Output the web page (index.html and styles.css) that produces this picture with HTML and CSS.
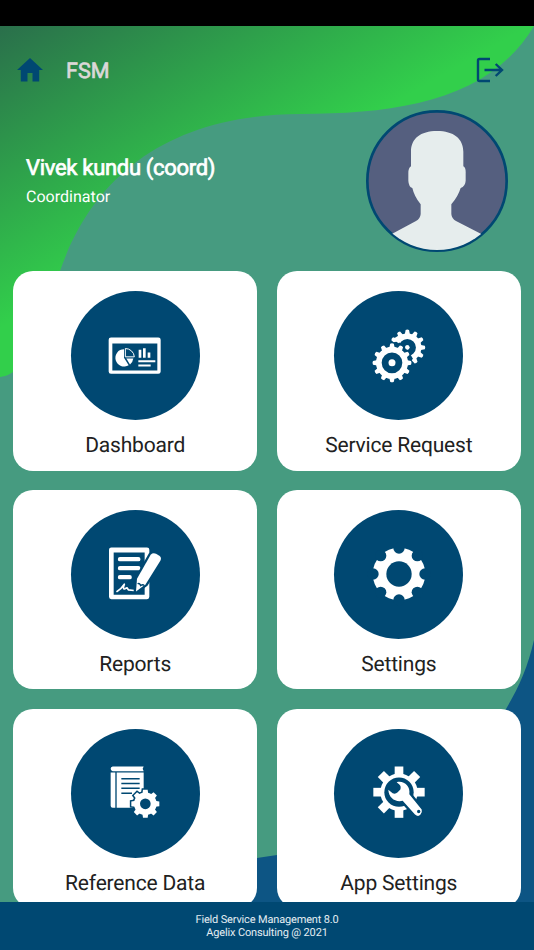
FILE: index.html
```html
<!DOCTYPE html>
<html lang="en">
<head>
<meta charset="utf-8">
<title>FSM</title>
<link rel="stylesheet" href="styles.css">
</head>
<body>
<div class="status"></div>
<div class="screen">
  <svg class="backdrop" viewBox="0 26 534 876" aria-hidden="true">
    <defs>
      <linearGradient id="leaf" gradientUnits="userSpaceOnUse" x1="0" y1="26" x2="130" y2="254">
        <stop offset="0" stop-color="#2a6f4b"/><stop offset="1" stop-color="#32cf4b"/>
      </linearGradient>
    </defs>
    <path fill="url(#leaf)" d="M0 26H534C490 100 400 114 300 114C175 115 95 170 60 271C42 322 30 374 0 377Z"/>
    <path fill="#0d5584" d="M534 640C528 667 518 689 506 709C460 792 380 830 277 855L257 858C220 870 200 885 180 902H534Z"/>
  </svg>
  <header class="bar">
    <svg class="home" viewBox="0 0 26 24"><path d="M13 0 26 12H22.200V23.500H15.500V15H10.500V23.500H3.800V12H0Z"/></svg>
    <h1 class="app">FSM</h1>
    <svg class="logout" viewBox="0 0 28 26"><path d="M14 2H3.500Q2 2 2 3.500V22.500Q2 24 3.500 24H14M8.500 13H26M19.700 7 26 13 19.700 19"/></svg>
  </header>
  <section class="profile">
    <div>
      <h2 class="name">Vivek kundu (coord)</h2>
      <p class="role">Coordinator</p>
    </div>
    <svg class="avatar" viewBox="48 210 426 426">
      <defs><clipPath id="face"><circle cx="261" cy="423" r="207"/></clipPath></defs>
      <circle cx="261" cy="423" r="209" fill="#555f7f" stroke="#004872" stroke-width="8"/>
      <path clip-path="url(#face)" fill="#e6eded" d="M261 273C311 273 340 296 340 335V379Q348 383 347 400V422Q346 439 332 444Q324 470 304 493V522Q305 536 318 543L410 590V640H110V590L198 543Q211 536 212 522V493Q193 470 187 444Q176 440 175 422V400Q175 383 183 379V335C183 296 211 273 261 273Z"/>
    </svg>
  </section>
  <main class="grid">
    <article class="card">
      <div class="disc"><svg viewBox="1 1.500 240 240">
        <path fill-rule="evenodd" d="M49 66H191Q198 66 198 73V168Q198 175 191 175H49Q42 175 42 168V73Q42 66 49 66ZM53 84V165H188V84Z"/>
        <path d="M88 101V127L102 149A26 26 0 1 1 88 101Z"/>
        <path class="line" stroke-width="3" d="M92 99V124H119A27 27 0 0 0 92 99Z"/>
        <path d="M95 129H116Q114 141 106 147Z"/>
        <path d="M132 103H140V127H132ZM145 98H153V127H145ZM159 111H167V127H159ZM131 134H182V140H131ZM131 147H168V153H131Z"/>
      </svg></div>
      <p class="label">Dashboard</p>
    </article>
    <article class="card">
      <div class="disc"><svg viewBox="3 1.500 240 240">
        <defs>
          <path id="cog" d="M-9 -40 -5.500 -57Q0 -60 5.500 -57L9 -40Z"/>
          <g id="teeth12"><use href="#cog"/><use href="#cog" transform="rotate(30)"/><use href="#cog" transform="rotate(60)"/><use href="#cog" transform="rotate(90)"/><use href="#cog" transform="rotate(120)"/><use href="#cog" transform="rotate(150)"/><use href="#cog" transform="rotate(180)"/><use href="#cog" transform="rotate(210)"/><use href="#cog" transform="rotate(240)"/><use href="#cog" transform="rotate(270)"/><use href="#cog" transform="rotate(300)"/><use href="#cog" transform="rotate(330)"/></g>
        </defs>
        <g transform="translate(148 96) scale(.92)"><circle r="37" class="line" stroke-width="18"/><circle r="7"/><use href="#teeth12"/></g>
        <circle class="cut" cx="102" cy="142" r="56"/>
        <path class="cut" d="M97 82 120 78 146 98 164 128 160 142 102 142Z"/>
        <path d="M106 70 121 83Q133 69 148 70L143 56 122 60Z"/>
        <circle cx="148" cy="96" r="6.500"/>
        <g transform="translate(102 142)"><circle r="39.500" class="line" stroke-width="17"/><circle r="10.500"/><use href="#teeth12"/></g>
      </svg></div>
      <p class="label">Service Request</p>
    </article>
    <article class="card">
      <div class="disc"><svg viewBox="1 1.500 240 240">
        <path fill-rule="evenodd" d="M50 42H157Q164 42 164 49V190Q164 197 157 197H50Q43 197 43 190V49Q43 42 50 42ZM57 57V184H150V57Z"/>
        <path class="line round" stroke-width="13" d="M76 77H131M76 104H131M76 131H105"/>
        <path class="line round" stroke-width="5" d="M67 174Q79 167 89 152Q83 169 91 166L97 163 101 169 118 171"/>
        <path class="outline" d="M168 64Q175 57 184 61L194 67Q202 73 197 82L153 152 124 174 127 136Z"/>
        <path class="cutline" d="M129 151Q134 147 138 156Q145 151 148 156"/>
      </svg></div>
      <p class="label">Reports</p>
    </article>
    <article class="card">
      <div class="disc"><svg viewBox="3 1 240 240">
        <circle cx="123" cy="121" r="79"/>
        <g class="cut"><circle cx="123" cy="121" r="38"/><circle cx="123" cy="43" r="17"/><circle cx="178" cy="66" r="17"/><circle cx="201" cy="121" r="17"/><circle cx="178" cy="176" r="17"/><circle cx="123" cy="199" r="17"/><circle cx="68" cy="176" r="17"/><circle cx="45" cy="121" r="17"/><circle cx="68" cy="66" r="17"/></g>
      </svg></div>
      <p class="label">Settings</p>
    </article>
    <article class="card">
      <div class="disc"><svg viewBox="1 1.500 240 240">
        <path d="M54 42H147L144 49 147 56H54Q48 55 48 49T54 42ZM48 60H62V166H54Q48 166 48 160ZM66 60H147V166H66Z"/>
        <path class="cutline" d="M80 79H135M80 93H135M80 107H135M80 122H112"/>
        <g transform="translate(152 154)">
          <defs><path id="tooth8" d="M-9 -28 -7 -42H7L9 -28Z"/><g id="teeth8"><use href="#tooth8"/><use href="#tooth8" transform="rotate(45)"/><use href="#tooth8" transform="rotate(90)"/><use href="#tooth8" transform="rotate(135)"/><use href="#tooth8" transform="rotate(180)"/><use href="#tooth8" transform="rotate(225)"/><use href="#tooth8" transform="rotate(270)"/><use href="#tooth8" transform="rotate(315)"/></g></defs>
          <g class="gap"><circle r="34"/><use href="#teeth8"/></g>
          <circle r="34"/><use href="#teeth8"/><circle class="cut" r="16"/>
        </g>
      </svg></div>
      <p class="label">Reference Data</p>
    </article>
    <article class="card">
      <div class="disc"><svg viewBox="3 1.500 240 240">
        <g transform="translate(123 119)"><defs><path id="block" d="M-13 -50V-77H13V-50Z"/></defs><circle r="56"/><use href="#block"/><use href="#block" transform="rotate(45)"/><use href="#block" transform="rotate(90)"/><use href="#block" transform="rotate(135)"/><use href="#block" transform="rotate(180)"/><use href="#block" transform="rotate(225)"/><use href="#block" transform="rotate(270)"/><use href="#block" transform="rotate(315)"/><circle class="cut" r="44"/></g>
        <path class="outline" d="M116 89C136 83 158 99 154 125L191 171Q194 180 187 187T171 186L134 145C112 150 92 137 91 112L104 122Q112 126 119 119L127 111Q130 101 124 96Z"/>
        <circle class="cut" cx="182" cy="177" r="5"/>
      </svg></div>
      <p class="label">App Settings</p>
    </article>
  </main>
</div>
<footer class="foot"><p>Field Service Management 8.0</p><p>Agelix Consulting @ 2021</p></footer>
</body>
</html>
```
FILE: styles.css
```css
* { box-sizing: border-box; margin: 0; padding: 0; }
body {
  display: flex;
  flex-direction: column;
  height: 950px;
  overflow: hidden;
  font-family: Roboto, sans-serif;
  text-rendering: geometricPrecision;
  background: #469b80;
}
.status { flex: none; height: 26px; background: #000; }
.screen { position: relative; height: 876px; overflow: hidden; }
.backdrop { position: absolute; inset: 0; width: 534px; height: 876px; }
.bar {
  position: relative;
  display: flex;
  align-items: center;
  height: 84px;
  padding: 4px 30px 0 17px;
}
.home { width: 26px; height: 24px; fill: #004872; }
.app {
  margin-left: 23px;
  padding-top: 2px;
  font-size: 21.500px;
  font-weight: 400;
  color: #dcd8d8;
  -webkit-text-stroke: .7px #dcd8d8;
}
.logout {
  width: 28px;
  height: 26px;
  margin-left: auto;
  fill: none;
  stroke: #004872;
  stroke-width: 2.4;
}
.profile {
  position: relative;
  display: flex;
  justify-content: space-between;
  height: 161px;
  padding: 0 26px;
  color: #fff;
}
.name {
  margin-top: 45px;
  font-size: 22px;
  line-height: 28px;
  font-weight: 400;
  letter-spacing: -.31px;
  -webkit-text-stroke: .7px #fff;
}
.role { margin-top: 4px; font-size: 16px; line-height: 20px; letter-spacing: .02px; }
.avatar { width: 142px; height: 142px; }
.grid {
  position: relative;
  display: grid;
  grid-template-columns: 1fr 1fr;
  grid-auto-rows: 199.500px;
  gap: 19.300px;
  padding: 0 13px;
}
.card {
  display: flex;
  flex-direction: column;
  align-items: center;
  padding-top: 20px;
  background: #fff;
  border-radius: 20px;
}
.disc {
  flex: none;
  display: grid;
  place-items: center;
  width: 129px;
  height: 129px;
  border-radius: 50%;
  background: #004872;
}
.disc svg { width: 80px; height: 80px; fill: #fff; }
.disc .cut { fill: #004872; }
.disc .line { fill: none; stroke: #fff; }
.disc .round { stroke-linecap: round; stroke-linejoin: round; }
.disc .cutline { fill: none; stroke: #004872; stroke-width: 4.500; }
.disc .gap { fill: #004872; stroke: #004872; stroke-width: 9; }
.disc .outline { stroke: #004872; stroke-width: 14; paint-order: stroke; stroke-linejoin: round; }
.label {
  margin-top: 12px;
  font-size: 21px;
  line-height: 28px;
  letter-spacing: -.19px;
  color: #212121;
}
.foot {
  flex: none;
  height: 48px;
  padding-top: 11px;
  background: #004872;
  color: #e4edf2;
  text-align: center;
  font-size: 11px;
  line-height: 13px;
  letter-spacing: -.16px;
}
```
